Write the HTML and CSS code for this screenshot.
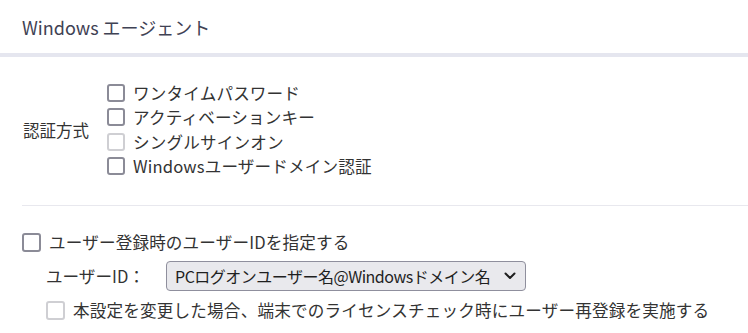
FILE: index.html
```html
<!DOCTYPE html>
<html lang="ja">
<head>
    <meta charset="UTF-8">
    <meta name="viewport" content="width=device-width, initial-scale=1.0">
    <title>Windows エージェント</title>
    <link rel="stylesheet" href="styles.css">
</head>
<body>
    <div class="panel">
        <div class="panel-header">Windows エージェント</div>

        <div class="panel-body">
            <div class="auth-row">
                <div class="auth-label">認証方式</div>
                <div class="auth-list">
                    <label class="check"><span class="box"></span>ワンタイムパスワード</label>
                    <label class="check"><span class="box"></span>アクティベーションキー</label>
                    <label class="check disabled"><span class="box"></span>シングルサインオン</label>
                    <label class="check"><span class="box"></span>Windowsユーザードメイン認証</label>
                </div>
            </div>

            <hr class="sep">

            <label class="check big"><span class="box"></span>ユーザー登録時のユーザーIDを指定する</label>

            <div class="userid-row">
                <span class="userid-label">ユーザーID：</span>
                <div class="select-wrap">
                    <select class="select">
                        <option>PCログオンユーザー名@Windowsドメイン名</option>
                    </select>
                    <svg class="chevron" width="12" height="8" viewBox="0 0 12 8">
                        <path d="M1.5 1.5 L6 6 L10.5 1.5" fill="none" stroke="#1f1f1f" stroke-width="2" stroke-linecap="round" stroke-linejoin="round"/>
                    </svg>
                </div>
            </div>

            <label class="check big disabled sub"><span class="box"></span><span class="sub-text">本設定を変更した場合、端末でのライセンスチェック時にユーザー再登録を実施する</span></label>
        </div>
    </div>
</body>
</html>
```

FILE: styles.css
```css
body {
    margin: 0;
    background: #fff;
    font-family: "Noto Sans CJK JP", "Noto Sans", sans-serif;
    color: #333;
}
.panel-header {
    height: 53px;
    line-height: 54px;
    padding-left: 22px;
    font-size: 18px;
    color: #3f4254;
    border-bottom: 4px solid #e5e6ef;
}
.panel-body {
    padding: 24px 0 0 22px;
}
.auth-row {
    display: flex;
    align-items: center;
}
.auth-label {
    width: 84px;
    padding-left: 1px;
    font-size: 16.5px;
}
.auth-list {
    display: flex;
    flex-direction: column;
}
.check {
    display: flex;
    align-items: center;
    height: 24.3px;
    font-size: 16.6px;
    letter-spacing: 0.15px;
}
.box {
    width: 14px;
    height: 14px;
    border: 2px solid #8b8b97;
    border-radius: 3px;
    margin-right: 8px;
    flex: none;
}
.check.disabled .box {
    border-color: #cfcfd3;
}
.sep {
    border: none;
    border-top: 1px solid #e8e8ee;
    margin: 27px 0 23px;
}
.check.big {
    height: 26px;
}
.check.big .box {
    width: 15px;
    height: 15px;
    margin-right: 8px;
}
.userid-row {
    display: flex;
    align-items: center;
    padding-left: 24px;
    margin-top: 6px;
    font-size: 16.6px;
}
.userid-label {
    width: 120px;
}
.select-wrap {
    position: relative;
}
.select {
    appearance: none;
    -webkit-appearance: none;
    width: 360px;
    height: 30px;
    padding: 0 30px 0 8px;
    font-family: inherit;
    font-size: 16px;
    letter-spacing: -0.5px;
    color: #1f1f1f;
    background: #e9e9ed;
    border: 1px solid #8f8f9d;
    border-radius: 4px;
}
.chevron {
    position: absolute;
    right: 10px;
    top: 11px;
}
.check.sub {
    padding-left: 24px;
    margin-top: 6px;
    letter-spacing: 0.17px;
}
.check.sub .sub-text {
    color: #333;
}
```
